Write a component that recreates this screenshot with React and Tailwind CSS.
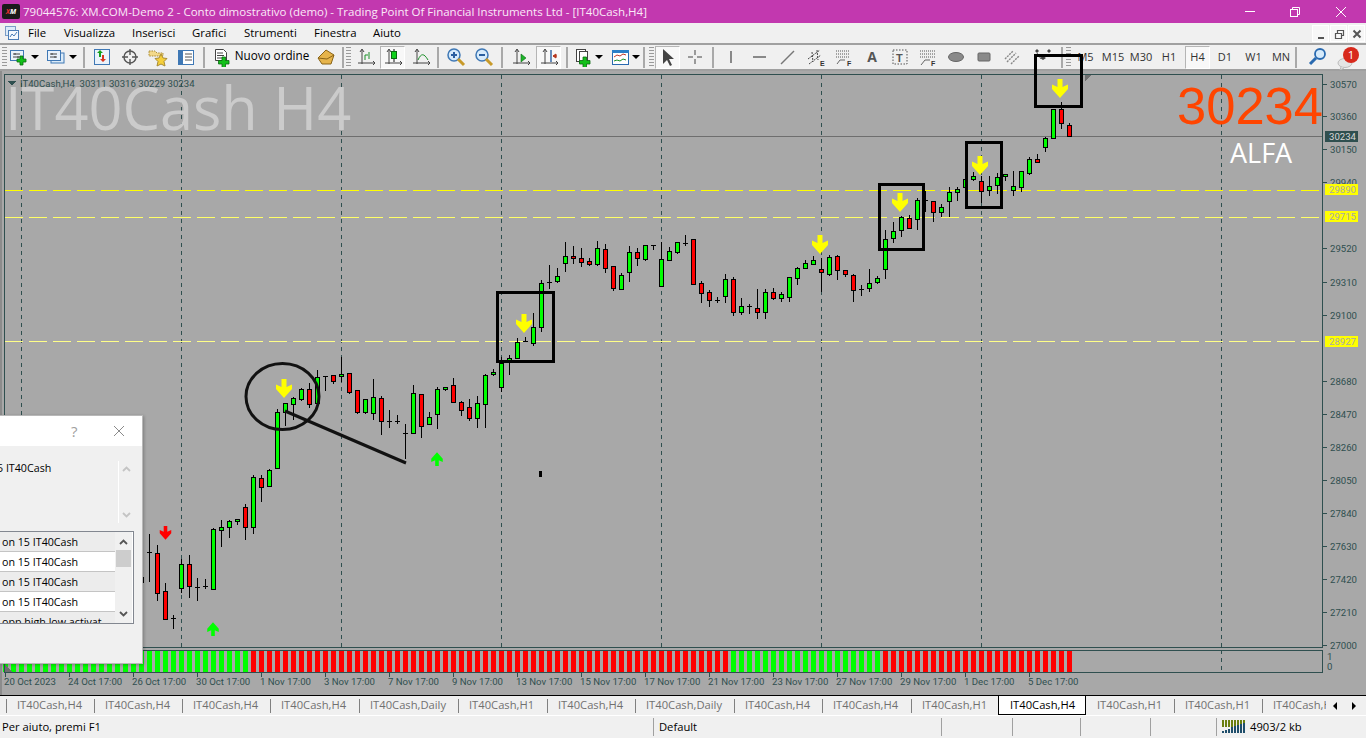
import React from "react";

const UI = { fontFamily: '"Open Sans","Noto Sans",sans-serif' };
const AX = 'Roboto,"Noto Sans",sans-serif';
const AXS = 9.6;

const C = [
["r",577,582,575,590],["d",552,552,534,582],["r",553,593,545,601],["r",591,619,583,619],["d",618,618,615,629],["g",564,588,559,593],["r",564,586,555,598],["d",587,587,578,601],["d",586,586,579,589],["g",529,589,528,589],
["g",527,530,520,547],["g",521,527,520,538],["g",519,521,519,525],["r",507,527,504,540],["g",477,527,475,534],["r",478,487,475,502],["g",470,486,469,487],["g",412,468,409,468],
["g",403,412,403,426],["g",398,404,397,420],["g",389,399,388,401],["r",389,404,383,408],["g",377,403,370,403],["d",376,376,376,391],["r",375,381,375,384],["g",374,376,357,382],["r",373,392,373,394],["r",390,412,390,414],["g",399,412,399,414],["g",397,413,379,420],["r",398,421,396,435],["d",421,421,410,428],["d",421,421,415,424],["d",433,433,424,459],["g",393,433,385,433],["r",394,426,394,438],["g",417,424,412,424],["g",389,414,387,429],["g",387,389,387,391],["r",385,402,378,402],["r",402,410,401,416],["r",407,418,399,421],["g",403,418,396,428],["g",375,404,374,428],["g",372,374,369,376],["g",363,387,357,392],["g",358,360,355,375],["g",342,358,338,358],["d",341,341,337,342],["g",327,343,313,346],["g",283,327,280,332],["d",282,282,265,289],["g",276,281,268,283],["g",256,263,242,272],["r",256,258,246,264],["r",258,262,248,267],["r",261,264,258,266],["g",248,264,241,266],["r",249,268,244,273],["r",266,288,266,291],["g",275,289,273,289],["g",252,272,246,282],["r",252,258,248,266],["g",245,259,245,261],["d",245,245,245,250],["g",259,286,242,287],["g",251,260,247,260],["g",242,252,242,254],["d",243,243,235,246],["r",239,284,239,284],["r",283,293,281,303],["r",292,300,290,307],["d",300,300,297,303],["g",279,296,274,303],["r",279,312,277,316],["g",306,312,298,315],["d",306,306,304,314],["r",308,312,289,319],["g",292,312,289,319],["r",292,298,288,300],["g",294,298,292,302],["g",277,297,277,302],["g",268,278,267,285],["g",263,268,260,268],["g",260,264,256,264],["r",269,272,258,292],["g",257,274,255,276],["r",256,270,255,280],["r",270,274,270,277],["r",275,290,274,302],["d",289,289,285,296],["g",283,288,269,292],["g",278,282,276,284],["g",239,269,230,279],["g",231,238,222,243],["g",217,230,216,237],["r",218,228,215,229],["g",200,219,198,230],["d",200,200,191,212],["r",201,212,201,222],["g",207,212,204,217],["g",192,201,187,217],["g",189,192,187,201],["g",179,187,177,196],["g",176,179,172,181],["r",181,191,176,203],["g",186,190,176,196],["g",177,185,173,194],["g",174,176,174,181],["g",186,190,171,196],["g",171,187,171,192],["g",159,173,157,175],["r",159,162,154,162],["g",138,147,137,152],["g",109,138,109,138],["r",109,123,102,129],["r",125,136,123,136],
];

const price = [[30570,84],[30360,116],[30150,149],[29940,182],[29520,248],[29310,282],[29100,315],[28680,381],[28470,414],[28260,447],[28050,480],[27840,513],[27630,546],[27420,579],[27210,612],[27000,645]];
const times = [["20 Oct 2023",4],["24 Oct 17:00",68],["26 Oct 17:00",132],["30 Oct 17:00",196],["1 Nov 17:00",260],["3 Nov 17:00",324],["7 Nov 17:00",388],["9 Nov 17:00",452],["13 Nov 17:00",516],["15 Nov 17:00",580],["17 Nov 17:00",644],["21 Nov 17:00",708],["23 Nov 17:00",772],["27 Nov 17:00",836],["29 Nov 17:00",900],["1 Dec 17:00",964],["5 Dec 17:00",1028]];
const labels = [[30234,131,"#2f4f4f","#d8d8d8"],[29890,184,"#ffff00","#a8a8a8"],[29715,211,"#ffff00","#a8a8a8"],[28927,336,"#ffff00","#a8a8a8"]];

function Arrow({ x, y, color, s = 1, up }) {
  return (
    <polygon
      transform={`translate(${x} ${y}) scale(${s} ${up ? -s : s})`}
      fill={color}
      points="-2.5,0 2.5,0 2.5,8 8,5.5 8,10 0,19 -8,10 -8,5.5 -2.5,8"
    />
  );
}

function Chart() {
  const bars = [];
  for (let x = 5; x <= 1069; x += 8) {
    const g = x <= 245 || (x >= 733 && x <= 877);
    bars.push(<rect key={x} x={x - 2} y={650} width={5} height={22} fill={g ? "#00ff00" : "#ff0000"} />);
  }
  return (
    <svg width="1366" height="624" viewBox="0 71 1366 624" className="overflow-visible" shapeRendering="crispEdges">
      <rect x="0" y="71" width="1366" height="624" fill="#a8a8a8" />
      <rect x="0" y="71" width="2" height="624" fill="#8c8c8c" />
      {[21, 181, 341, 501, 661, 821, 981, 1221].map((x) => (
        <g key={x}>
          <line x1={x + 0.5} x2={x + 0.5} y1={75} y2={647} stroke="#2f4f4f" strokeDasharray="4 4" />
          <line x1={x + 0.5} x2={x + 0.5} y1={650} y2={672} stroke="#2f4f4f" strokeDasharray="4 4" />
        </g>
      ))}
      <text x="5" y="130" fontSize="59.5" fill="#cbcbcb" fontFamily="Open Sans" shapeRendering="auto">IT40Cash H4</text>
      <line x1="5" x2="1323" y1="136.5" y2="136.5" stroke="#6e6e6e" />
      <line x1="5" x2="1323" y1="190.5" y2="190.5" stroke="#ffff00" strokeDasharray="18 6" />
      <line x1="5" x2="1323" y1="217.5" y2="217.5" stroke="#ffff66" strokeDasharray="18 6" />
      <line x1="5" x2="1323" y1="341.5" y2="341.5" stroke="#ffff88" strokeDasharray="18 6" />
      {bars}
      {C.map(([t, a, b, h, l], i) => {
        const x = 141 + i * 8;
        const f = t === "g" ? "#00ff00" : "#ff0000";
        return (
          <g key={i}>
            <rect x={x} y={h} width="1" height={Math.max(l - h, 1)} fill="#000" />
            {t === "d" ? (
              <rect x={x - 2} y={a} width="5" height="1" fill="#000" />
            ) : (
              <rect x={x - 1.5} y={a + 0.5} width="4" height={Math.max(b - a, 1)} fill={f} stroke="#000" />
            )}
          </g>
        );
      })}
      <rect x="5" y="74" width="1318" height="573" fill="none" stroke="#2f4f4f" transform="translate(-0.5 0.5)" />
      <rect x="5" y="650" width="1318" height="22" fill="none" stroke="#2f4f4f" transform="translate(-0.5 0.5)" />
      <polygon points="8,81 16,81 12,86" fill="#2f4f4f" />
      <polygon points="1085,75 1092,75 1085,81" fill="#6e6e6e" />
      <polygon points="5,665 12,672 5,672" fill="#6e6e6e" />
      <g shapeRendering="auto">
        <text x="20" y="87" fontSize={AXS} fill="#2f4f4f" fontFamily={AX} style={{ whiteSpace: "pre" }}>IT40Cash,H4  30311 30316 30229 30234</text>
        <text x="1177" y="124" fontSize="52.5" fill="#ff4500" fontFamily="Liberation Sans">30234</text>
        <text x="1230" y="163" fontSize="27" fill="#ffffff" fontFamily="Open Sans">ALFA</text>
        {price.map(([p, y]) => (
          <text key={p} x="1330" y={y + 4} fontSize={AXS} fill="#2f4f4f" fontFamily={AX}>{p}</text>
        ))}
        <text x="1327" y="660" fontSize={AXS} fill="#2f4f4f" fontFamily={AX}>1</text>
        <text x="1327" y="670" fontSize={AXS} fill="#2f4f4f" fontFamily={AX}>0</text>
        {times.map(([t, x]) => (
          <text key={t} x={x} y="685" fontSize={AXS} fill="#2f4f4f" fontFamily={AX}>{t}</text>
        ))}
      </g>
      {price.map(([p, y]) => (
        <rect key={p} x="1323" y={y} width="4" height="1" fill="#2f4f4f" />
      ))}
      {times.map(([t, x]) => (
        <rect key={t} x={x + 1} y="672" width="1" height="5" fill="#2f4f4f" />
      ))}
      {labels.map(([p, y, bg, fg]) => (
        <g key={p}>
          <rect x="1325" y={y} width="33" height="11" fill={bg} />
          <text x="1329" y={y + 9} fontSize={AXS} fill={fg} fontFamily={AX} shapeRendering="auto">{p}</text>
        </g>
      ))}
      <g shapeRendering="auto">
        {[[284, 379], [524, 314], [820, 235], [900, 193], [980, 156], [1060, 79]].map(([x, y]) => (
          <Arrow key={x} x={x} y={y} color="#ffff00" />
        ))}
        <Arrow x={165.5} y={526} color="#ff0000" s={0.72} />
        <Arrow x={213} y={636} color="#00ff00" s={0.72} up />
        <Arrow x={437} y={466} color="#00ff00" s={0.72} up />
        <ellipse cx="282.5" cy="396.5" rx="36.5" ry="33" fill="none" stroke="#111" strokeWidth="3" />
        <line x1="285" y1="411" x2="406" y2="463" stroke="#111" strokeWidth="3" />
      </g>
      <rect x="539" y="471" width="3" height="6" fill="#000" />
      <g fill="none" stroke="#000" strokeWidth="3">
        <rect x="497.5" y="292.5" width="56" height="69" />
        <rect x="879.5" y="184.5" width="44" height="65" />
        <rect x="966.5" y="142.5" width="35" height="65" />
        <rect x="1035.5" y="55.5" width="46" height="51" />
      </g>
    </svg>
  );
}

const Win = ({ plus, second }) => (
  <svg width="20" height="20" viewBox="0 0 20 20">
    {second && <rect x="5" y="6" width="13" height="10" fill="#dcebf8" stroke="#3f78b5" />}
    <rect x="1.5" y="3.5" width="13" height="10" fill="#e9f2fb" stroke="#3f78b5" />
    <path d="M4 7h7M4 10h7M6 6v2M9 9v2" stroke="#444" />
    {plus && <path d="M11 9h3v3h3v3h-3v3h-3v-3H8v-3h3z" fill="#12c01a" stroke="#0a6a10" strokeWidth=".8" />}
  </svg>
);
const Caret = () => <span className="w-0 h-0 border-x-[4px] border-x-transparent border-t-[4px] border-t-black" />;
const Sep = () => <span className="w-[2px] h-[21px] bg-[#a9a9a9]" />;
const Grip = () => <span className="w-[5px] h-[21px] bg-[repeating-linear-gradient(to_bottom,#9a9a9a_0,#9a9a9a_1px,transparent_1px,transparent_3px)]" />;

const Ax = ({ children }) => (
  <svg width="20" height="20" viewBox="0 0 20 20" fill="none">
    <path d="M6 3v14M2 16h16" stroke="#444" />
    <path d="M4 5l2-3 2 3M17 14l2 2-2 2" stroke="#444" fill="none" />
    {children}
  </svg>
);

const D = ({ children, w = 20, h = 20 }) => (
  <svg width={w} height={h} viewBox="0 0 20 20" fill="none">{children}</svg>
);

const tools = [
  [8, <Grip />], [22, <Win plus />], [10, <Caret />], [4, null], [24, <Win second />], [10, <Caret />], [12, <Sep />],
  [24, <D><rect x="2.5" y="2.5" width="15" height="15" fill="#e9f2fb" stroke="#3f78b5" /><path d="M7 10V6H5l3-3 3 3H9v4z" fill="#14a01c" /><path d="M12 8v4h2l-3 3-3-3h2V8z" fill="#d8351f" /></D>],
  [32, <D><circle cx="10" cy="10" r="6" stroke="#555" strokeWidth="1.4" /><path d="M10 2v6M10 12v6M2 10h6M12 10h6" stroke="#555" strokeWidth="1.4" /></D>],
  [24, <D><path d="M1 4h6l2 2h6v3H1z" fill="#f3d98a" stroke="#a88b35" strokeDasharray="1.5 1" /><path d="M13 7l2 4 4 .5-3 3 1 4.5-4-2-4 2 1-4.5-3-3 4-.5z" fill="#f5cf3b" stroke="#a88b35" /></D>],
  [32, <D><rect x="2.5" y="3.5" width="15" height="14" fill="#fff" stroke="#3f78b5" /><rect x="3" y="4" width="4" height="13" fill="#3f78b5" /><path d="M9 7h7M9 10h7M9 13h7" stroke="#555" /></D>],
  [4, <Sep />], [4, null],
  [24, <D><path d="M3.5 2.5h8l3 3v8h-11z" fill="#fff" stroke="#444" /><path d="M5 6h6M5 8.5h7M5 11h5" stroke="#444" /><path d="M10 10h3.5v3.5H17V17h-3.5v3.500H10V17H6.500v-3.500H10z" fill="#12c01a" stroke="#0a6a10" strokeWidth=".8" /></D>],
  [76, <span className="text-[11.7px] text-black whitespace-nowrap -mt-[3px]">Nuovo ordine</span>],
  [32, <D><path d="M2 11l8-8 8 5-3 9-9 0z" fill="#e6b44b" stroke="#8a6418" /><path d="M2 11l9 1 7-4" stroke="#8a6418" /></D>],
  [2, <Sep />], [8, <Grip />],
  [28, <Ax><path d="M9 13v-5M9 8h3M13 12V5" stroke="#1a8f28" /></Ax>],
  [25, "box", <Ax><path d="M11 2v13" stroke="#111" /><rect x="8.5" y="4.5" width="5" height="7" fill="#0fd01a" stroke="#0a6a10" /></Ax>],
  [32, <Ax><path d="M7 13c3-7 6-7 10 0" stroke="#1a8f28" /></Ax>],
  [2, <Sep />],
  [34, <D><circle cx="8" cy="8" r="6" fill="#d7ebfb" stroke="#3f78b5" strokeWidth="1.5" /><path d="M5 8h6M8 5v6" stroke="#2a5fa0" strokeWidth="2" /><path d="M12 12l6 6" stroke="#c89a2a" strokeWidth="3" /></D>],
  [22, <D><circle cx="8" cy="8" r="6" fill="#d7ebfb" stroke="#3f78b5" strokeWidth="1.5" /><path d="M5 8h6" stroke="#2a5fa0" strokeWidth="2" /><path d="M12 12l6 6" stroke="#c89a2a" strokeWidth="3" /></D>],
  [14, <Sep />],
  [24, <Ax><path d="M10 7l5 4-5 4z" fill="#1db42a" stroke="#0a6a10" strokeWidth=".6" /></Ax>],
  [3, null],
  [25, "box", <Ax><path d="M12 3v12" stroke="#2a5fa0" strokeWidth="1.4" /><path d="M18 9h-4M14 9l3-2v4z" fill="#b5361f" stroke="#b5361f" /></Ax>],
  [11, <Sep />],
  [22, <D><rect x="3.5" y="2.5" width="9" height="12" fill="#fff" stroke="#444" /><rect x="6.5" y="4.5" width="8" height="11" fill="#fff" stroke="#444" /><path d="M10 10h3.5v3.500H17V17h-3.500v3.500H10V17H6.500v-3.500H10z" fill="#12c01a" stroke="#0a6a10" strokeWidth=".8" /></D>],
  [10, <Caret />], [6, null],
  [22, <D><rect x="1.5" y="3.5" width="16" height="14" fill="#fff" stroke="#2a6ab0" /><rect x="1" y="3" width="17" height="3" fill="#2a7fc8" /><path d="M3 10l3-2 3 1 3-2 3 1" stroke="#c0392b" /><path d="M3 14l3-1 3 1 3-2 3 1" stroke="#1a8f28" /></D>],
  [8, <Caret />], [8, <Sep />], [6, <Grip />], [1, null],
  [25, "box", <D><path d="M5 2v15l4-4 3 6 2-1-3-6h5z" fill="#444" /></D>],
  [30, <D><path d="M10 3v5M10 12v5M3 10h5M12 10h5" stroke="#444" /></D>],
  [6, <Sep />],
  [30, <D><path d="M10 4v12" stroke="#444" strokeWidth="1.2" /></D>],
  [28, <D><path d="M3 10h13" stroke="#444" strokeWidth="1.2" /></D>],
  [28, <D><path d="M3 17L16 4" stroke="#777" strokeWidth="1.4" /></D>],
  [28, <D><path d="M2 12L14 3M3 17L15 8M6 5l1 10M11 3l1 10" stroke="#444" strokeDasharray="2 1" /><text x="14" y="19" fontSize="7" fill="#333" fontFamily="Liberation Sans" fontWeight="700">E</text></D>],
  [28, <D><path d="M2 4h14M2 7h14M2 10h14" stroke="#555" strokeDasharray="1 1" /><path d="M3 17l3-4h5" stroke="#666" /><text x="13" y="19" fontSize="7" fill="#333" fontFamily="Liberation Sans" fontWeight="700">F</text></D>],
  [28, <span className="text-[14px] font-bold text-[#555] -mt-[1px]">A</span>],
  [28, <D><rect x="3" y="3" width="14" height="14" stroke="#555" strokeDasharray="1.5 1.5" /><text x="6" y="15" fontSize="11" fontWeight="700" fill="#555" fontFamily="Liberation Sans">T</text></D>],
  [28, <D><path d="M2 4h15M2 7h15M2 10h15" stroke="#555" strokeDasharray="1 1" /><path d="M3 18l4-5h5" stroke="#666" /><text x="13" y="19" fontSize="7" fill="#333" fontFamily="Liberation Sans" fontWeight="700">F</text></D>],
  [28, <D><ellipse cx="10" cy="10" rx="7.5" ry="4.5" fill="#8a8a8a" stroke="#666" /></D>],
  [28, <D><rect x="4" y="6" width="12" height="8" rx="1" fill="#8a8a8a" stroke="#666" /></D>],
  [28, <D><path d="M3 12l8-8M5 15l9-9M9 17l8-8" stroke="#888" strokeWidth="1.4" strokeDasharray="2 1" /></D>],
  [34, <D><path d="M4 2l2 2-2 2-2-2zM16 2l2 2-2 2-2-2zM10 9l3 2-3 2-3-2z" fill="#444" /><path d="M4 6l4 6" stroke="#666" /></D>],
  [4, <Sep />], [8, <Grip />],
  [27, "M5"], [28, "M15"], [28, "M30"], [28, "H1"], [2, null], [25, "boxH4"], [30, "D1"], [27, "W1"], [28, "MN"],
  [2, <Sep />],
  [42, <D><circle cx="12" cy="7" r="5" fill="#d7ebfb" stroke="#2a6ab0" strokeWidth="1.8" /><path d="M8 11l-6 6" stroke="#2a6ab0" strokeWidth="3" /></D>],
];

function Toolbar() {
  return (
    <div className="h-[28px] shrink-0 bg-[#f0f0f0] border-t-2 border-b-2 border-[#a0a0a0] flex items-center box-border relative">
      {tools.map((t, i) => {
        const [w, c, extra] = t;
        const styleW = { width: w };
        if (c === "box" || c === "boxH4") {
          return (
            <div key={i} style={styleW} className="h-[23px] shrink-0 flex items-center justify-center border border-[#b5b5b5] border-r-white border-b-white bg-[#f8f8f8] text-[11px] text-[#333]">
              {c === "box" ? extra : "H4"}
            </div>
          );
        }
        return (
          <div key={i} style={styleW} className="h-full shrink-0 flex items-center justify-center text-[11px] text-[#333]">
            {c}
          </div>
        );
      })}
      <div className="flex-1 h-full relative">
        <svg width="16" height="12" viewBox="0 0 16 12" className="absolute -left-[2px] top-[13px]"><ellipse cx="8" cy="5" rx="7" ry="4.5" fill="#e4e4e4" stroke="#bbb" /><path d="M4 9l-1 3 4-2" fill="#e4e4e4" stroke="#bbb" /></svg>
        <span className="absolute left-[4px] top-[2px] w-[16px] h-[16px] rounded-full bg-[#d8291c] text-white text-[11.5px] leading-[16px] text-center">1</span>
      </div>
    </div>
  );
}

const menus = [["File", 36], ["Visualizza", 68], ["Inserisci", 60], ["Grafici", 52], ["Strumenti", 70], ["Finestra", 59], ["Aiuto", 50]];

const tabs = [["H4",88],["H4",88],["H4",88],["H4",89],["Daily",99],["H1",89],["H4",88],["Daily",99],["H4",88],["H4",89],["H1",87]];

const miniIcons = [
  <path key="a" d="M3 10h6" stroke="#555" strokeWidth="2" />,
  <path key="b" d="M2.5 5.5h6v5h-6zM4.500 5V2.500h6v5H9" stroke="#555" strokeWidth="1.2" fill="none" />,
  <path key="c" d="M2.500 2.500l7 7M9.500 2.500l-7 7" stroke="#555" strokeWidth="2" />,
];

export default function App() {
  return (
    <div className="w-[1366px] h-[738px] flex flex-col overflow-hidden bg-[#f0f0f0]" style={UI}>
      <div className="h-[23px] shrink-0 bg-[#c238af] flex items-center text-white text-[11.5px]">
        <div className="w-[18px] h-[15px] ml-[2px] mr-[3px] bg-[#1a1a1a] rounded-[2px] flex items-center justify-center">
          <span className="text-[7px] font-bold italic text-white leading-none"><span className="text-[#e03030]">X</span>M</span>
        </div>
        <span className="text-[#fbe9f8] whitespace-nowrap">79044576: XM.COM-Demo 2 - Conto dimostrativo (demo) - Trading Point Of Financial Instruments Ltd - [IT40Cash,H4]</span>
        <div className="ml-auto flex items-center h-full">
          <div className="w-[49px] flex justify-center"><span className="w-[10px] h-[1px] bg-white" /></div>
          <div className="w-[42px] flex justify-center">
            <svg width="12" height="12" viewBox="0 0 12 12" fill="none" stroke="#fff"><rect x="1.5" y="3.5" width="7" height="7" /><path d="M3.5 3.5v-2h7v7h-2" /></svg>
          </div>
          <div className="w-[50px] flex justify-center">
            <svg width="12" height="12" viewBox="0 0 12 12" stroke="#fff"><path d="M1 1l10 10M11 1L1 11" /></svg>
          </div>
        </div>
      </div>

      <div className="h-[20px] shrink-0 flex items-center text-[11.4px] text-black bg-[#f0f0f0]">
        <div className="w-[28px] flex justify-center pr-[4px]">
          <svg width="16" height="16" viewBox="0 0 16 16"><rect x="1.5" y="1.5" width="10" height="9" fill="#dcebf8" stroke="#7a9cc6" /><rect x="4.5" y="5.5" width="10" height="9" fill="#f4f9fd" stroke="#4a7cb5" /><path d="M6 12l2-3 2 2 3-4" stroke="#4a7cb5" fill="none" /></svg>
        </div>
        {menus.map(([m, w]) => (
          <div key={m} style={{ width: w }} className="shrink-0 whitespace-nowrap">{m}</div>
        ))}
        <div className="ml-auto flex gap-[1px] pr-[1px] h-[17px] mt-[1px]">
          {miniIcons.map((s, i) => (
            <div key={i} className="w-[17px] bg-[#f7f7f7] border border-white flex items-center justify-center">
              <svg width="12" height="12" viewBox="0 0 12 12">{s}</svg>
            </div>
          ))}
        </div>
      </div>

      <Toolbar />

      <div className="relative flex-1 min-h-0">
        <Chart />
        <div className="absolute left-0 top-[344px] w-[143px] h-[249px] bg-[#f0f0f0] border-r border-t border-b border-[#b8b8b8] shadow-[1px_1px_3px_rgba(0,0,0,0.25)] flex flex-col text-[10.7px] text-black">
          <div className="h-[30px] shrink-0 bg-white flex items-center">
            <span className="ml-[71px] w-[30px] text-[15px] text-[#a0a0a0]">?</span>
            <svg width="12" height="12" viewBox="0 0 12 12" className="ml-[12px]" stroke="#8a8a8a"><path d="M1 1l10 10M11 1L1 11" /></svg>
          </div>
          <div className="h-[85px] shrink-0 flex">
            <div className="w-[117px] pt-[14px] whitespace-nowrap overflow-hidden">
              <span className="-ml-[3px] block">5 IT40Cash</span>
            </div>
            <div className="w-[16px] ml-[1px] mt-[15px] h-[62px] border-l border-white flex flex-col items-center justify-between py-[5px]">
              <svg width="9" height="6" viewBox="0 0 9 6" fill="none" stroke="#c4c4c4" strokeWidth="1.8"><path d="M1 5l3.5-3.5L8 5" /></svg>
              <svg width="9" height="6" viewBox="0 0 9 6" fill="none" stroke="#c4c4c4" strokeWidth="1.8"><path d="M1 1l3.5 3.5L8 1" /></svg>
            </div>
          </div>
          <div className="w-[134px] h-[93px] shrink-0 border border-[#828790] border-l-0 bg-white flex overflow-hidden">
            <div className="w-[115px] shrink-0">
              {["on 15 IT40Cash", "on 15 IT40Cash", "on 15 IT40Cash", "on 15 IT40Cash", "opp high low activat"].map((t, i) => (
                <div key={i} className={`h-[20px] leading-[20px] pl-[2px] border-b border-[#c4c4c4] whitespace-nowrap overflow-hidden ${i % 2 ? "bg-white" : "bg-[#ececec]"}`}>{t}</div>
              ))}
            </div>
            <div className="w-[17px] bg-[#f0f0f0] flex flex-col items-center pt-[7px] pb-[6px]">
              <svg width="9" height="6" viewBox="0 0 9 6" fill="none" stroke="#555" strokeWidth="1.8"><path d="M1 5l3.5-3.5L8 5" /></svg>
              <span className="w-[15px] h-[17px] mt-[5px] bg-[#cdcdcd]" />
              <svg width="9" height="6" viewBox="0 0 9 6" fill="none" stroke="#555" strokeWidth="1.8" className="mt-auto"><path d="M1 1l3.5 3.5L8 1" /></svg>
            </div>
          </div>
        </div>
      </div>

      <div className="h-[20px] shrink-0 border-t border-black bg-[#f0f0f0] flex text-[11.2px] text-[#707070] relative">
        <div className="w-[6px] shrink-0" />
        <div className="w-[1320px] flex overflow-hidden shrink-0">
          {tabs.map(([t, w], i) => (
            <div key={i} style={{ width: w }} className="shrink-0 h-[19px] flex items-center">
              <span className="w-[1px] h-[14px] bg-[#808080] mr-[10px]" />
              <span className="whitespace-nowrap">IT40Cash,{t}</span>
            </div>
          ))}
          <div className="w-[88px] shrink-0 h-[19px] border-x border-b border-black bg-white text-black flex items-center pl-[11px]">IT40Cash,H4</div>
          {["H1", "H1", "H"].map((t, i) => (
            <div key={i} className="w-[88px] shrink-0 h-[19px] flex items-center">
              {i > 0 ? <span className="w-[1px] h-[14px] bg-[#808080] mr-[10px]" /> : <span className="w-[1px] mr-[10px]" />}
              <span className="whitespace-nowrap">IT40Cash,{t}</span>
            </div>
          ))}
        </div>
        <div className="flex items-center gap-[15px] ml-[7px]">
          <span className="w-0 h-0 border-y-[4px] border-y-transparent border-r-[4px] border-r-black" />
          <span className="w-0 h-0 border-y-[4px] border-y-transparent border-l-[4px] border-l-black" />
        </div>
      </div>

      <div className="h-[23px] shrink-0 flex items-center text-[11.2px] text-black bg-[#f0f0f0] border-t border-white">
        {[["Per aiuto, premi F1", 654], ["Default", 288], ["", 71], ["", 68], ["", 70], ["", 66]].map(([t, w], i) => (
          <div key={i} style={{ width: w }} className={`shrink-0 h-[18px] flex items-center whitespace-nowrap ${i ? "pl-[5px]" : "pl-[2px]"} border-r border-[#a0a0a0]`}>{t}</div>
        ))}
        <div className="flex items-center pl-[5px] gap-[4px]">
          <svg width="24" height="13" viewBox="0 0 24 13" shapeRendering="crispEdges">
            {Array.from({ length: 8 }).map((_, i) => (
              <g key={i}>
                <rect x={i * 3} y={0} width="2" height="7" fill="#6a7f10" />
                <rect x={i * 3} y={11 - i * 1.2} width="2" height={2 + i * 1.2} fill="#1f4e6b" />
              </g>
            ))}
          </svg>
          <span className="whitespace-nowrap">4903/2 kb</span>
        </div>
      </div>
    </div>
  );
}
